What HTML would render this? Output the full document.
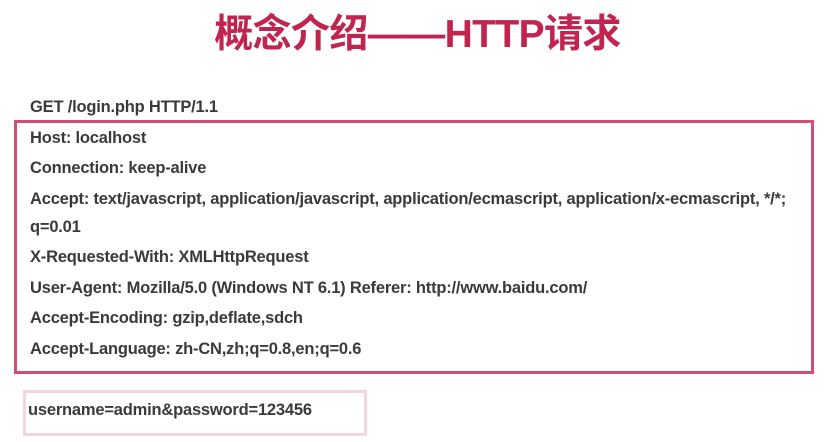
<!DOCTYPE html>
<html><head><meta charset="utf-8"><style>
body{margin:0;width:835px;height:442px;background:#fff;overflow:hidden;position:relative;font-family:"Liberation Sans","Noto Sans CJK SC",sans-serif;}
.t{position:absolute;top:3px;left:0;width:835px;text-align:center;color:#c0254f;font-weight:bold;font-size:39px;letter-spacing:-0.6px;font-family:"Liberation Sans","Noto Sans CJK SC",sans-serif;}
.l{position:absolute;left:30px;font-size:16.5px;font-weight:bold;color:#3a3a3a;white-space:nowrap;letter-spacing:-0.2px;line-height:20px;}
.b1{position:absolute;left:14px;top:120px;width:794px;height:248px;border:3px solid #d2506f;}
.b2{position:absolute;left:23px;top:390px;width:338px;height:40px;border:3px solid #f4d5db;}
</style></head><body>
<div class="t">概念介绍——HTTP请求</div>
<div class="b1"></div><div class="b2"></div>
<div class="l" style="top:97px">GET /login.php HTTP/1.1</div>
<div class="l" style="top:128px">Host: localhost</div>
<div class="l" style="top:158px">Connection: keep-alive</div>
<div class="l" style="top:189px">Accept: text/javascript, application/javascript, application/ecmascript, application/x-ecmascript, */*;</div>
<div class="l" style="top:217px">q=0.01</div>
<div class="l" style="top:247px">X-Requested-With: XMLHttpRequest</div>
<div class="l" style="top:278px">User-Agent: Mozilla/5.0 (Windows NT 6.1) Referer: http://www.baidu.com/</div>
<div class="l" style="top:308px">Accept-Encoding: gzip,deflate,sdch</div>
<div class="l" style="top:339px">Accept-Language: zh-CN,zh;q=0.8,en;q=0.6</div>
<div class="l" style="top:400px;left:28px">username=admin&amp;password=123456</div>
</body></html>
